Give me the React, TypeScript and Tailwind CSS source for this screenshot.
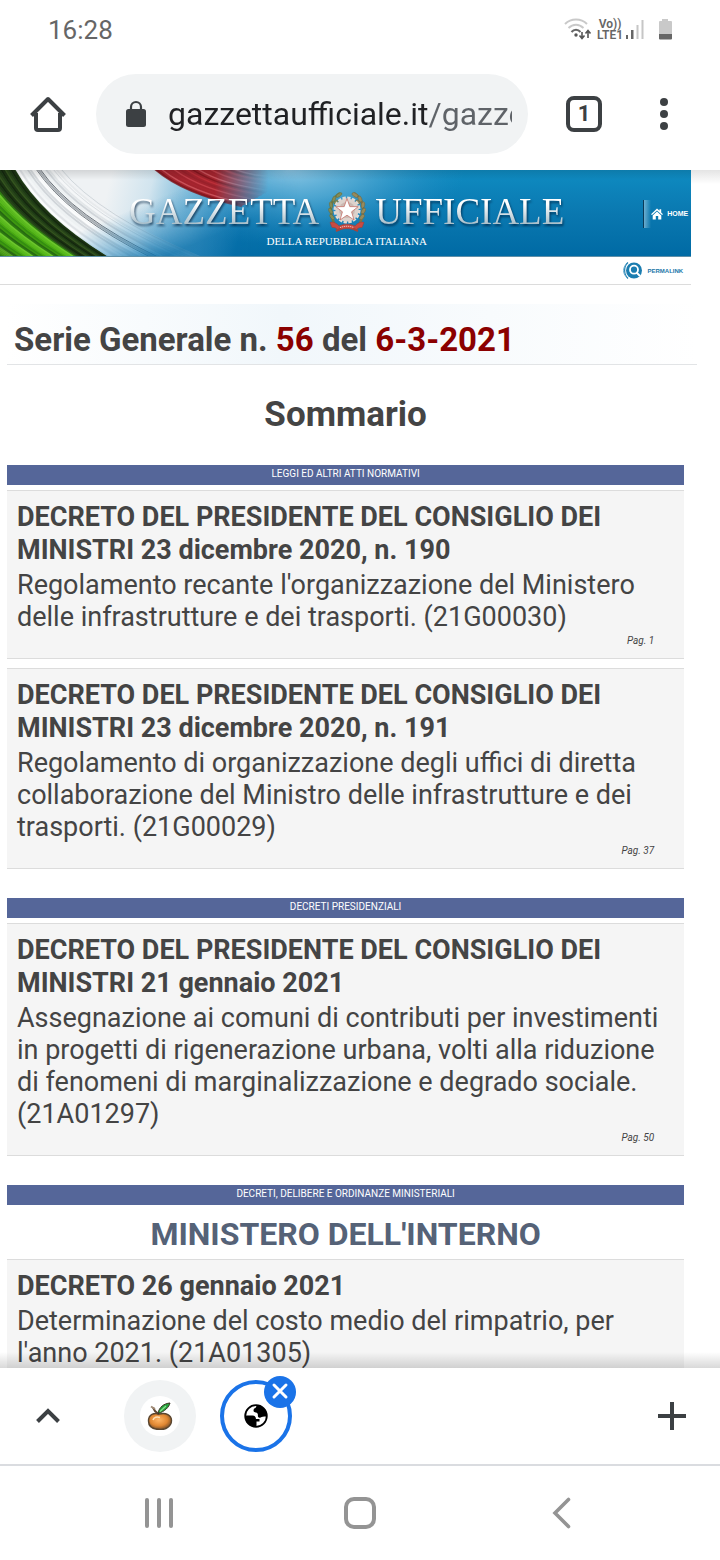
import type { ReactNode } from 'react';

type Act = {
  title: string;
  summary: string;
  page?: string;
};

type Section = {
  label: string;
  ministry?: string;
  acts: Act[];
};

const sections: Section[] = [
  {
    label: 'LEGGI ED ALTRI ATTI NORMATIVI',
    acts: [
      {
        title: 'DECRETO DEL PRESIDENTE DEL CONSIGLIO DEI MINISTRI 23 dicembre 2020, n. 190',
        summary:
          "Regolamento recante l'organizzazione del Ministero delle infrastrutture e dei trasporti. (21G00030)",
        page: 'Pag. 1',
      },
      {
        title: 'DECRETO DEL PRESIDENTE DEL CONSIGLIO DEI MINISTRI 23 dicembre 2020, n. 191',
        summary:
          'Regolamento di organizzazione degli uffici di diretta collaborazione del Ministro delle infrastrutture e dei trasporti. (21G00029)',
        page: 'Pag. 37',
      },
    ],
  },
  {
    label: 'DECRETI PRESIDENZIALI',
    acts: [
      {
        title: 'DECRETO DEL PRESIDENTE DEL CONSIGLIO DEI MINISTRI 21 gennaio 2021',
        summary:
          'Assegnazione ai comuni di contributi per investimenti in progetti di rigenerazione urbana, volti alla riduzione di fenomeni di marginalizzazione e degrado sociale. (21A01297)',
        page: 'Pag. 50',
      },
    ],
  },
  {
    label: 'DECRETI, DELIBERE E ORDINANZE MINISTERIALI',
    ministry: "MINISTERO DELL'INTERNO",
    acts: [
      {
        title: 'DECRETO 26 gennaio 2021',
        summary: "Determinazione del costo medio del rimpatrio, per l'anno 2021. (21A01305)",
      },
    ],
  },
];

const greens = ['#2f7a12', '#57b81c', '#3f9a10', '#6cc72c', '#48a812', '#276a12', '#5dbb20', '#348c12'];
const darks = ['#1c3312', '#29461a', '#14260e', '#35551f', '#1d3a14'];
const greys = ['#ffffff', '#d2d6da', '#eef1f3', '#dcdfe2', '#ffffff', '#c8cdd2', '#f4f6f7'];
const reds = ['#7d141c', '#c2313a', '#96202a', '#c9444e', '#a82630', '#d25c64'];

// One strand of the flag, from the top edge at x = s to the bottom edge
const strand = (s: number) => {
  const e = s < 15 ? 110 + (s - 15) * 1.05 : 110 + (s - 15) * 2;
  return `M${s} -1 Q${s + (e - s) * 0.27} 46 ${e} 88`;
};

const redStrand = (i: number) =>
  `M${154 + i * 6} -2 C${172 + i * 6} ${14 - i * 0.6} ${200 + i * 5} ${27 - i * 1.6} ${242 + i * 4} ${36 - i * 2.2}`;

function BannerArt() {
  return (
    <svg
      className="absolute inset-0 h-full w-full"
      viewBox="0 0 691 87"
      preserveAspectRatio="none"
      aria-hidden="true"
    >
      <defs>
        <linearGradient id="sky" x1="0" y1="0" x2="0" y2="1">
          <stop offset="0" stopColor="#0f8cc2" />
          <stop offset="0.5" stopColor="#0a78b0" />
          <stop offset="1" stopColor="#006aa4" />
        </linearGradient>
        <radialGradient
          id="glow"
          gradientUnits="userSpaceOnUse"
          cx="0"
          cy="0"
          r="1"
          gradientTransform="translate(290 0) scale(175 75)"
        >
          <stop offset="0" stopColor="#8cc6e4" />
          <stop offset="0.4" stopColor="#5fb0d8" stopOpacity="0.75" />
          <stop offset="1" stopColor="#2b8fc6" stopOpacity="0" />
        </radialGradient>
        <linearGradient id="silk" gradientUnits="userSpaceOnUse" x1="105" y1="30" x2="240" y2="62">
          <stop offset="0" stopColor="#eff2f4" />
          <stop offset="0.3" stopColor="#dbe9f1" stopOpacity="0.95" />
          <stop offset="0.65" stopColor="#9ccbe4" stopOpacity="0.65" />
          <stop offset="1" stopColor="#6db3da" stopOpacity="0" />
        </linearGradient>
        <linearGradient id="deep" gradientUnits="userSpaceOnUse" x1="130" y1="40" x2="152" y2="92">
          <stop offset="0" stopColor="#2f8fc2" stopOpacity="0" />
          <stop offset="0.55" stopColor="#2a88bd" stopOpacity="0.5" />
          <stop offset="1" stopColor="#0a70aa" stopOpacity="0.95" />
        </linearGradient>
        <linearGradient id="redFade" gradientUnits="userSpaceOnUse" x1="150" y1="0" x2="268" y2="0">
          <stop offset="0" stopColor="#fff" />
          <stop offset="0.55" stopColor="#fff" />
          <stop offset="1" stopColor="#000" />
        </linearGradient>
        <mask id="redMask" maskUnits="userSpaceOnUse" x="140" y="-5" width="140" height="50">
          <rect x="140" y="-5" width="140" height="50" fill="url(#redFade)" />
        </mask>
        <linearGradient id="deepFade" gradientUnits="userSpaceOnUse" x1="150" y1="0" x2="300" y2="0">
          <stop offset="0" stopColor="#fff" />
          <stop offset="1" stopColor="#000" />
        </linearGradient>
        <mask id="deepMask" maskUnits="userSpaceOnUse" x="0" y="0" width="300" height="87">
          <rect width="300" height="87" fill="url(#deepFade)" />
        </mask>
        <linearGradient id="shade" x1="0" y1="0" x2="0" y2="1">
          <stop offset="0" stopColor="#000" stopOpacity="0.12" />
          <stop offset="1" stopColor="#000" stopOpacity="0" />
        </linearGradient>
      </defs>

      <rect width="691" height="87" fill="url(#sky)" />
      <rect width="691" height="87" fill="url(#glow)" />
      <rect width="260" height="87" fill="url(#silk)" />

      {/* White silk strands */}
      {Array.from({ length: 18 }, (_, i) => (
        <path
          key={i}
          d={strand(17 + i * 2.6)}
          fill="none"
          stroke={greys[(i * 3) % 7]}
          strokeWidth={1.8}
          strokeOpacity={i < 12 ? 0.8 : 0.4}
        />
      ))}
      <path d={strand(36)} fill="none" stroke="#6b7278" strokeWidth="0.9" />
      <path d={strand(38)} fill="none" stroke="#a9afb4" strokeWidth="2" />
      <path d={strand(40)} fill="none" stroke="#4a525a" strokeWidth="0.8" />
      <path d={strand(53)} fill="none" stroke="#7c8a96" strokeWidth="0.6" strokeOpacity="0.4" />
      <path d={strand(61)} fill="none" stroke="#6d7f8e" strokeWidth="0.6" strokeOpacity="0.4" />
      <g mask="url(#deepMask)">
        <rect width="300" height="87" fill="url(#deep)" />
      </g>

      {/* Green field */}
      <path d="M0 -1H15Q41 46 110 88H0Z" fill="#24401a" />
      {Array.from({ length: 14 }, (_, i) => (
        <path
          key={i}
          d={strand(13 - i * 2)}
          fill="none"
          stroke={darks[(i * 2) % 5]}
          strokeWidth={1.5}
        />
      ))}
      {Array.from({ length: 34 }, (_, i) => (
        <path
          key={i}
          d={strand(-16 - i * 2.4)}
          fill="none"
          stroke={greens[(i * 3) % 8]}
          strokeWidth={2.2}
          strokeOpacity={i > 22 ? 0.65 : 1}
        />
      ))}

      {/* Red field */}
      <g mask="url(#redMask)">
        <path d="M153 -2C172 14 200 28 242 36L270 20V-2Z" fill="#a3242e" />
        {Array.from({ length: 15 }, (_, i) => (
          <path
            key={i}
            d={redStrand(i)}
            fill="none"
            stroke={reds[(i * 5) % 6]}
            strokeWidth={i === 0 ? 2.5 : 1.4}
            strokeOpacity="0.8"
          />
        ))}
      </g>

      <rect width="691" height="10" fill="url(#shade)" />
      <rect y="86" width="691" height="1" fill="#5f8fa8" />
    </svg>
  );
}

function Emblem() {
  return (
    <svg className="h-11 w-[38px] shrink-0" viewBox="0 0 38 44" aria-label="Repubblica Italiana">
      {/* Olive and oak branches */}
      <path d="M12 3C3 8 0 20 6 33" fill="none" stroke="#6f7a45" strokeWidth="2.4" />
      <path d="M26 3C35 8 38 20 32 33" fill="none" stroke="#7d7448" strokeWidth="2.4" />
      <g fill="#848b55" stroke="#5a6638" strokeWidth="0.4">
        <ellipse cx="11" cy="5" rx="3.4" ry="1.6" transform="rotate(-35 11 5)" />
        <ellipse cx="6" cy="9" rx="3.2" ry="1.6" transform="rotate(-70 6 9)" />
        <ellipse cx="3" cy="15" rx="3.2" ry="1.6" transform="rotate(-100 3 15)" />
        <ellipse cx="2.6" cy="21" rx="3.2" ry="1.6" transform="rotate(60 2.6 21)" />
        <ellipse cx="4" cy="27" rx="3.2" ry="1.6" transform="rotate(50 4 27)" />
        <ellipse cx="8" cy="12" rx="2.6" ry="1.3" transform="rotate(-40 8 12)" />
      </g>
      <g fill="#968a5c" stroke="#655d38" strokeWidth="0.4">
        <ellipse cx="27" cy="5" rx="3.4" ry="1.8" transform="rotate(35 27 5)" />
        <ellipse cx="32" cy="9" rx="3.2" ry="1.8" transform="rotate(70 32 9)" />
        <ellipse cx="35" cy="15" rx="3.2" ry="1.8" transform="rotate(100 35 15)" />
        <ellipse cx="35.4" cy="21" rx="3.2" ry="1.8" transform="rotate(-60 35.4 21)" />
        <ellipse cx="34" cy="27" rx="3.2" ry="1.8" transform="rotate(-50 34 27)" />
        <ellipse cx="30" cy="12" rx="2.6" ry="1.4" transform="rotate(40 30 12)" />
      </g>
      <circle cx="19" cy="20" r="12" fill="none" stroke="#e2dbd6" strokeWidth="3" strokeDasharray="3.3 1.4" />
      <circle cx="19" cy="20" r="11.6" fill="#ddd2cc" />
      <circle cx="19" cy="20" r="8" fill="#cbb9b2" />
      <path
        d="M19 8.5L21.8 16.6L30.2 16.7L23.6 21.8L26 30L19 25.2L12 30L14.4 21.8L7.8 16.7L16.2 16.6Z"
        fill="#fff"
        stroke="#c4716a"
        strokeWidth="0.8"
      />
      <path
        d="M2 32.5C5 31 9 33.5 11 36C16 33.5 22 33.5 27 36C29 33.5 33 31 36 32.5L34 37.5C31 37 29 38.5 28 40.5C22 38 16 38 10 40.5C9 38.5 7 37 4 37.5Z"
        fill="#c84a42"
        stroke="#9c3a34"
        strokeWidth="0.5"
      />
      <path d="M8 41L13 38.5M30 41L25 38.5" stroke="#a5453d" strokeWidth="2" />
      <path d="M12 37.6C17 35.8 21 35.8 26 37.6" fill="none" stroke="#f1cfc8" strokeWidth="0.9" strokeDasharray="1.2 0.8" />
    </svg>
  );
}

function StatusBar() {
  return (
    <div className="flex h-[60px] shrink-0 items-center justify-between pr-[47px] pl-12 text-[#666]">
      <time className="text-[26px]">16:28</time>
      <div className="flex items-center">
        <svg className="h-6 w-8" viewBox="0 0 32 24" fill="none" aria-label="Wi-Fi">
          <path d="M2 6C8 0 18 0 24 6" stroke="#c9c9c9" strokeWidth="2" />
          <path d="M5.5 10C10 5.6 16 5.6 20.5 10" stroke="#c9c9c9" strokeWidth="2" />
          <path d="M8.5 14C11 11 15 11 17.5 14" stroke="#666" strokeWidth="2" />
          <circle cx="13" cy="17" r="1.7" fill="#555" />
          <path d="M19 14V20M16.5 17.5L19 20.5L21.5 17.5" stroke="#555" strokeWidth="1.6" />
          <path d="M25 20V13M22.5 15.5L25 12.5L27.5 15.5" stroke="#555" strokeWidth="1.6" />
        </svg>
        <div className="ml-0.5 flex w-[26px] flex-col items-center text-[12px] leading-[11px] font-semibold">
          <span>Vo))</span>
          <span>LTE1</span>
        </div>
        <svg className="ml-0.5 h-6 w-5" viewBox="0 0 20 24" aria-label="Segnale">
          <path d="M1 17h2v4H1z M6 12h2.500v9H6z" fill="#666" />
          <path d="M11.5 7H13.5v14h-2z M16.5 2H18.5v19h-2z" fill="#c6c6c6" />
        </svg>
        <svg className="ml-3 h-6 w-4" viewBox="0 0 16 24" aria-label="Batteria">
          <path d="M5 1H11V3H14Q15 3 15 4V21H2V4Q2 3 3 3H5Z" fill="#c9c9c9" />
          <path d="M2 16H15V20.5Q15 21.5 14 21.5H3Q2 21.5 2 20.5Z" fill="#666" />
        </svg>
      </div>
    </div>
  );
}

function Toolbar() {
  return (
    <header className="flex shrink-0 items-center pt-3.5 pr-8 pb-4">
      <button type="button" aria-label="Home" className="flex w-24 justify-center">
        <svg className="size-10" viewBox="0 0 40 40" fill="none" stroke="#3c4043" strokeWidth="4">
          <path d="M8 19V34Q8 36 10 36H30Q32 36 32 34V19" />
          <path d="M3.5 21.5L20 5L36.5 21.5" strokeLinejoin="round" />
        </svg>
      </button>
      <div className="flex h-20 min-w-0 flex-1 items-center rounded-full bg-[#f1f3f4] pr-4 pl-7">
        <svg className="mr-5 h-8 w-6 shrink-0" viewBox="0 0 24 32" aria-hidden="true">
          <rect x="2" y="11" width="20" height="18" rx="2.5" fill="#3c4043" />
          <path d="M7 12V9A5 5 0 0 1 17 9V12" fill="none" stroke="#3c4043" strokeWidth="2.2" />
        </svg>
        <input
          type="text"
          aria-label="Indirizzo"
          defaultValue="gazzettaufficiale.it/gazzetta"
          className="min-w-0 flex-1 bg-linear-to-r from-[#202124] from-[260px] via-[#5f6368] via-[260px] to-[#5f6368] bg-clip-text text-[32px] leading-10 text-transparent caret-black outline-none"
        />
      </div>
      <button type="button" aria-label="Schede" className="flex w-28 justify-center">
        <span className="flex size-9 items-center justify-center rounded-lg border-4 border-[#3c4043] text-[22px] leading-7 font-bold text-[#3c4043]">
          1
        </span>
      </button>
      <button type="button" aria-label="Menu" className="flex w-12 flex-col items-center gap-1">
        <span className="size-2 rounded-full bg-[#3c4043]" />
        <span className="size-2 rounded-full bg-[#3c4043]" />
        <span className="size-2 rounded-full bg-[#3c4043]" />
      </button>
    </header>
  );
}

function BannerWord({ children }: { children: ReactNode }) {
  return (
    <span className="bg-linear-to-b from-white from-30% to-[#a9bfca] to-80% bg-clip-text text-[37px] leading-10 text-transparent drop-shadow-[1px_2px_1px_rgba(0,30,60,0.7)]">
      {children}
    </span>
  );
}

function Banner() {
  return (
    <div className="relative w-[96%] overflow-hidden">
      <BannerArt />
      <div className="relative flex h-[87px] items-center pl-[129px] font-['Liberation_Serif',serif]">
        <div className="flex shrink-0 flex-col items-center pt-2.5">
          <h1 className="flex items-center gap-[9px]">
            <BannerWord>GAZZETTA</BannerWord>
            <Emblem />
            <BannerWord>UFFICIALE</BannerWord>
          </h1>
          <p className="text-[11px] leading-[14px] text-white">DELLA REPUBBLICA ITALIANA</p>
        </div>
        <nav className="ml-auto flex w-12 shrink-0 items-center">
          <span className="h-7 w-2 border-l border-[#0b3a58] bg-linear-to-r from-white/40 to-transparent" />
          <a
            href="#home"
            className="flex items-center gap-1 font-['Liberation_Sans',sans-serif] text-[7px] leading-3 font-bold text-white"
          >
            <svg className="size-3 shrink-0" viewBox="0 0 12 12" fill="#fff" aria-hidden="true">
              <path d="M6 0.5L8.5 2.8V1.3H10.2V4.4L12 6.2L11 7L6 2.4L1 7L0 6.2Z" />
              <path d="M6 3.5L10.3 7.4V11.5H7.2V8H4.8V11.5H1.7V7.4Z" />
            </svg>
            HOME
          </a>
        </nav>
      </div>
    </div>
  );
}

function PermalinkBar() {
  return (
    <div className="flex h-7 w-[96%] items-center justify-end border-b border-[#dcdcdc] pr-2">
      <a
        href="#permalink"
        className="flex items-center gap-1.5 font-['Liberation_Sans',sans-serif] text-[6px] leading-3 font-bold text-[#1b76a8]"
      >
        <svg className="size-[19px]" viewBox="0 0 19 19" fill="none" aria-hidden="true">
          <circle cx="11" cy="9.5" r="8" fill="#1b7db0" />
          <path d="M5 1.5C0.5 5 0.5 13.5 5 17.5" stroke="#1b7db0" strokeWidth="1.2" />
          <path d="M3 3.5C-0.2 7 -0.2 12 3 15.5" stroke="#63a8cc" strokeWidth="1" />
          <circle cx="11" cy="8.7" r="4" stroke="#fff" strokeWidth="1.8" />
          <path d="M13.5 11.5L17 15" stroke="#fff" strokeWidth="2" />
        </svg>
        PERMALINK
      </a>
    </div>
  );
}

function ActCard({ act }: { act: Act }) {
  return (
    <article className="border-y border-[#dcdcdc] bg-[#f5f5f5] px-2.5 pt-2.5 pb-[9px]">
      <a href="#atto" className="block">
        <h3 className="text-[27px] leading-[33px] font-bold">{act.title}</h3>
        <p className="mt-0.5 text-[27px] leading-8">{act.summary}</p>
      </a>
      {act.page && <p className="pr-5 text-right text-[10px] leading-4 italic">{act.page}</p>}
    </article>
  );
}

function SectionBlock({ section }: { section: Section }) {
  return (
    <section>
      <h2 className="h-5 bg-[#556699] text-center text-[10px] leading-[18px] text-white">
        {section.label}
      </h2>
      {section.ministry ? (
        <p className="pt-1 text-center text-[32px] leading-[50px] font-bold text-[#556277]">
          {section.ministry}
        </p>
      ) : (
        <div className="h-[5px]" />
      )}
      <div className="flex flex-col gap-[9px]">
        {section.acts.map((act) => (
          <ActCard key={act.title} act={act} />
        ))}
      </div>
    </section>
  );
}

function TabStrip() {
  return (
    <div className="relative flex h-[98px] shrink-0 items-center border-b-2 border-[#dadce0] bg-white">
      {/* Shadow cast over the page */}
      <div className="absolute inset-x-0 bottom-full h-4 bg-linear-to-t from-black/15 to-transparent" />
      <button type="button" aria-label="Espandi" className="flex w-24 justify-center">
        <svg className="h-6 w-8" viewBox="0 0 32 24" fill="none" stroke="#3c4043" strokeWidth="4">
          <path d="M5.5 17.5L16 7L26.5 17.5" />
        </svg>
      </button>
      <button
        type="button"
        aria-label="Scheda 1"
        className="ml-7 flex size-[72px] items-center justify-center rounded-full bg-[#f1f3f4]"
      >
        <span className="flex size-10 items-center justify-center rounded-full bg-white">
          <svg className="h-7 w-7" viewBox="0 0 28 28" fill="none">
            <defs>
              <radialGradient id="peel" cx="0.45" cy="0.4" r="0.62">
                <stop offset="0" stopColor="#ffb667" />
                <stop offset="0.6" stopColor="#e08732" />
                <stop offset="1" stopColor="#6f4a28" />
              </radialGradient>
            </defs>
            <path
              d="M2.5 19C2.5 12 8 10.5 13.5 12C20 10.5 25.5 13 25.5 18.5C25.5 24 20 28 14 27.5C7 27.5 2.5 24.5 2.5 19Z"
              fill="url(#peel)"
              stroke="#5a4630"
              strokeWidth="1.4"
            />
            <path d="M7 18C8 15 11 14.5 14 15.5" stroke="#ffe0b4" strokeWidth="1.5" />
            <path d="M13 12.5L9 9L7 5.5" stroke="#5d4532" strokeWidth="2" />
            <path d="M5 4.5L9 7" stroke="#a08b78" strokeWidth="2" />
            <path d="M12 11.5C13 5 18 1.5 24 1C23 5 19 9.5 12 11.5Z" fill="#23a33c" stroke="#3a3020" strokeWidth="1" />
            <path d="M14 9.5L20 4" stroke="#8be08f" strokeWidth="1.2" />
          </svg>
        </span>
      </button>
      <div className="relative ml-6">
        <button
          type="button"
          aria-label="Scheda 2"
          className="flex size-[72px] items-center justify-center rounded-full border-4 border-[#1a73e8]"
        >
          <svg className="size-6" viewBox="0 0 24 24" aria-hidden="true">
            <circle cx="12" cy="12" r="10.8" fill="#fff" stroke="#000" strokeWidth="1.8" />
            <path d="M1.2 11.5H8.5Q12 11.5 12 15H15.5V17.5H12.5V22.8C5.5 22.8 1 18 1.2 11.5Z" fill="#000" />
            <path
              d="M12.5 1.2C12.5 4.5 9.5 4 9.5 6.5C9.5 9 12.5 8 13.5 9.5C14.5 11 13 12.5 15 13.5C17 14.5 18 11.5 22.8 13C23.5 6 18.5 1.2 12.5 1.2Z"
              fill="#000"
            />
          </svg>
        </button>
        <button
          type="button"
          aria-label="Chiudi scheda"
          className="absolute -top-1 -right-1 flex size-8 items-center justify-center rounded-full bg-[#1a73e8]"
        >
          <svg className="size-5" viewBox="0 0 20 20" stroke="#fff" strokeWidth="3" strokeLinecap="round">
            <path d="M4 3L16 15M16 3L4 15" />
          </svg>
        </button>
      </div>
      <button type="button" aria-label="Nuova scheda" className="ml-auto flex w-24 justify-center">
        <svg className="size-7" viewBox="0 0 28 28" stroke="#3c4043" strokeWidth="4">
          <path d="M14 0V28M0 14H28" />
        </svg>
      </button>
    </div>
  );
}

function SystemNav() {
  return (
    <nav className="grid h-[94px] shrink-0 grid-cols-3 items-center bg-white px-[58px]">
      <button type="button" aria-label="Recenti" className="flex justify-center gap-2">
        <span className="h-[30px] w-1 rounded-full bg-[#949494]" />
        <span className="h-[30px] w-1 rounded-full bg-[#949494]" />
        <span className="h-[30px] w-1 rounded-full bg-[#949494]" />
      </button>
      <button type="button" aria-label="Schermata principale" className="flex justify-center">
        <span className="size-8 rounded-[10px] border-4 border-[#949494]" />
      </button>
      <button type="button" aria-label="Indietro" className="flex justify-center">
        <svg className="size-8" viewBox="0 0 32 32" fill="none" stroke="#949494" strokeWidth="3.6">
          <path d="M23.5 2.5L10 16L23.5 29.5" strokeLinecap="round" />
        </svg>
      </button>
    </nav>
  );
}

export default function App() {
  return (
    <div className="flex h-screen flex-col overflow-hidden bg-white font-[Roboto,sans-serif] text-[#444]">
      <StatusBar />
      <Toolbar />

      <main className="min-h-0 flex-1 overflow-hidden bg-linear-to-b from-[#e4e4e4] to-white to-[14px]">
        <Banner />
        <PermalinkBar />

        {/* Issue number */}
        <div className="pt-[19px] pr-[23px] pl-[7px]">
          <h2 className="border-b border-[#e2e4e6] bg-linear-to-r from-white via-[#f1f7fb] via-40% to-white pt-3 pl-[7px] text-[33px] leading-12 font-bold">
            Serie Generale n. <span className="text-[#8b0000]">56</span> del{' '}
            <span className="text-[#8b0000]">6-3-2021</span>
          </h2>
        </div>

        <div className="w-[96%] px-[7px]">
          <h2 className="py-[30px] text-center text-[35px] leading-10 font-bold">Sommario</h2>
          <div className="flex flex-col gap-[29px]">
            {sections.map((section) => (
              <SectionBlock key={section.label} section={section} />
            ))}
          </div>
        </div>
      </main>

      <TabStrip />
      <SystemNav />
    </div>
  );
}
